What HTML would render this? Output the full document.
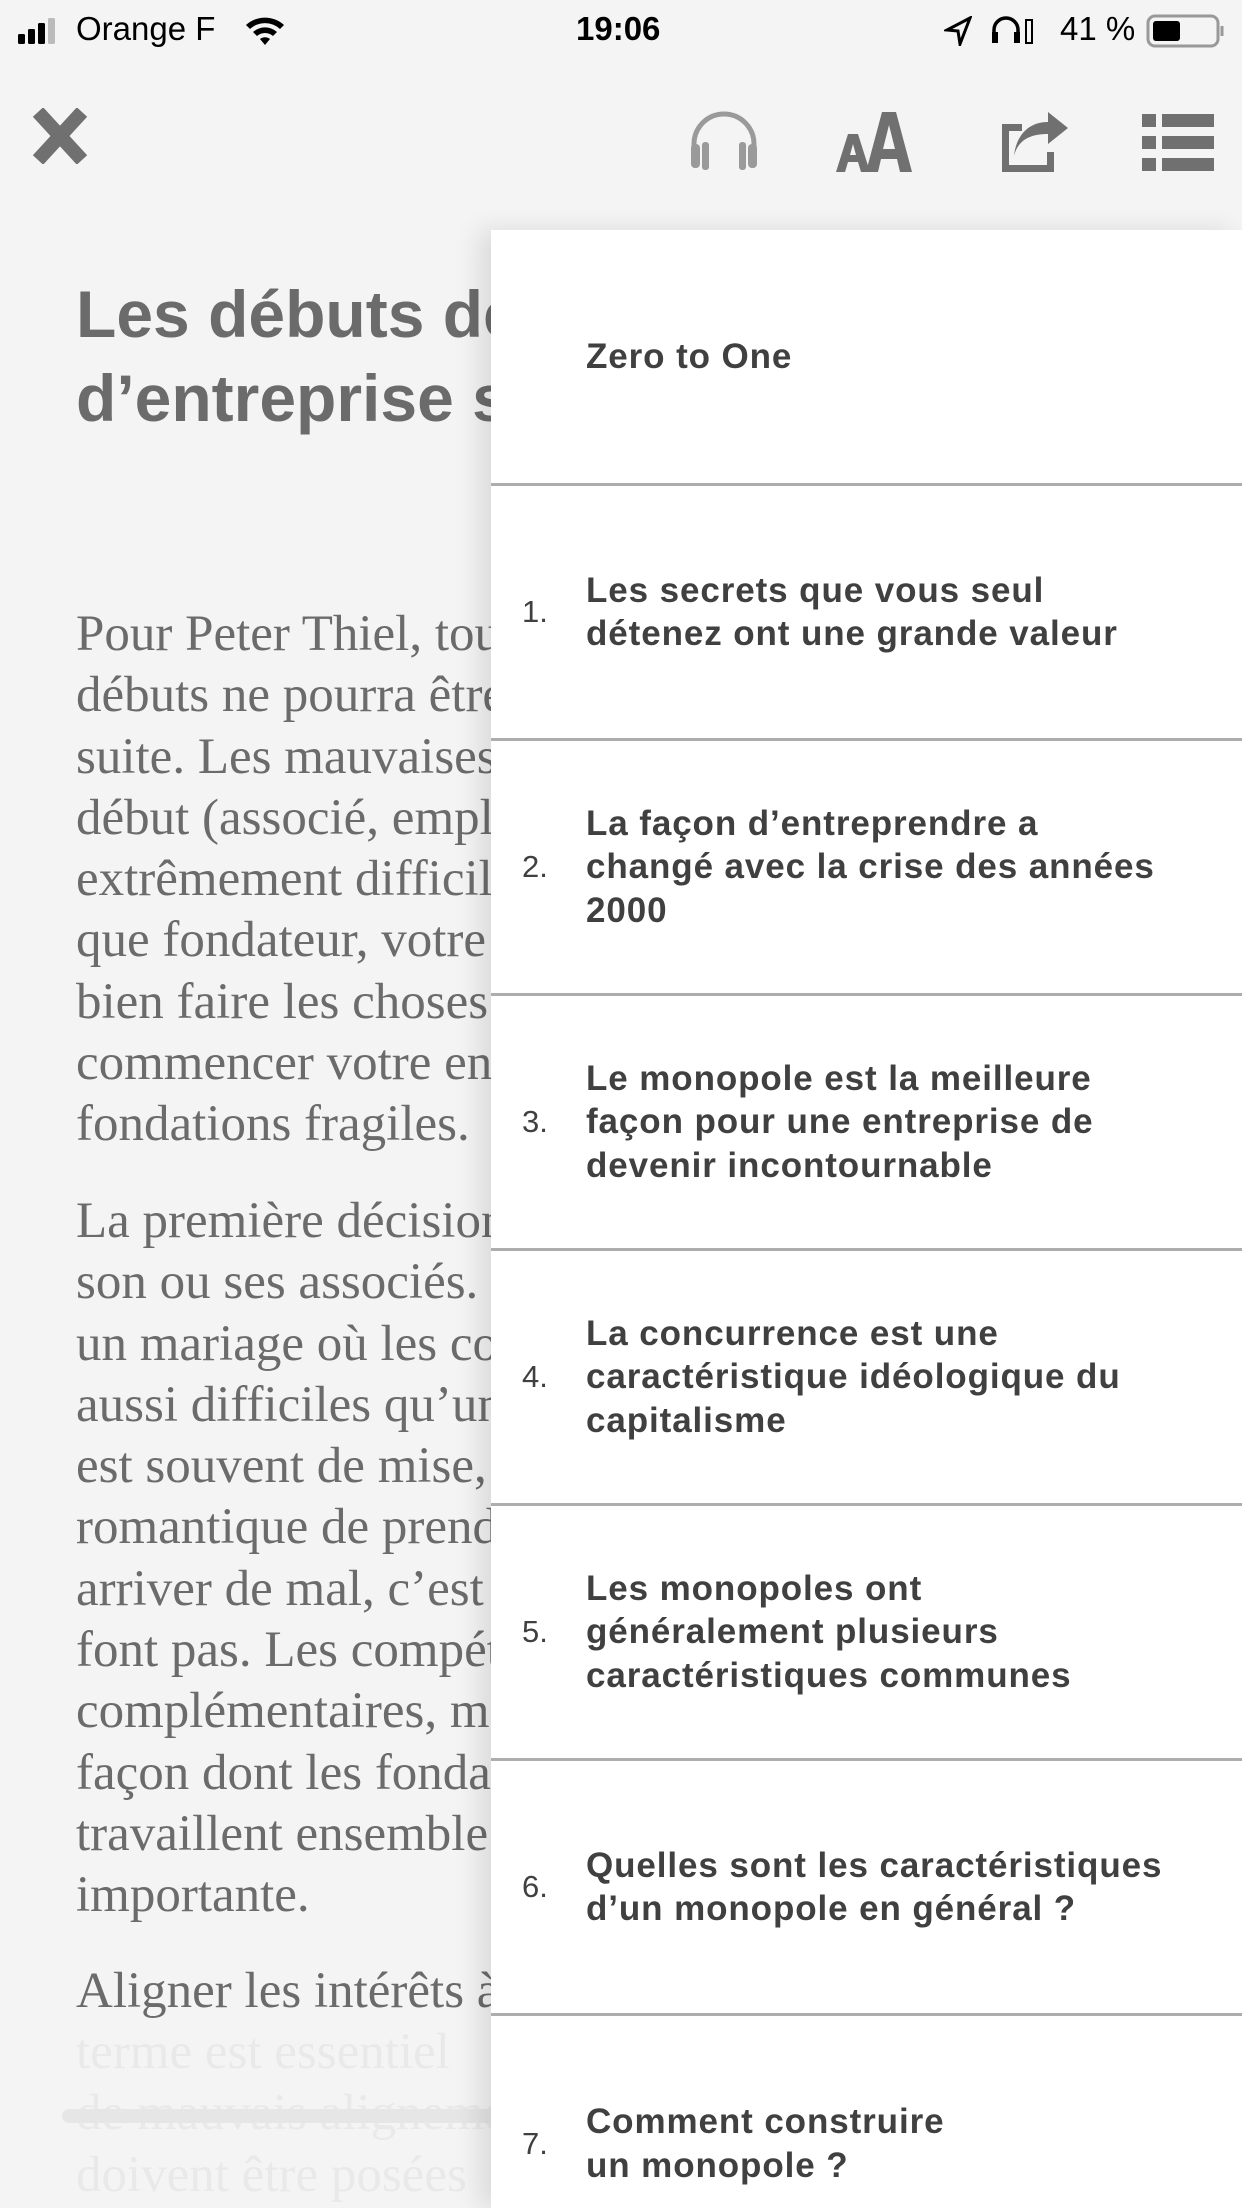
<!DOCTYPE html>
<html style="width:1242px;height:2208px;overflow:hidden"><head><meta charset="utf-8">
<style>
*{margin:0;padding:0;box-sizing:border-box}
body{width:1242px;height:2208px;overflow:hidden;background:#f4f4f4;position:relative;font-family:"Liberation Sans",sans-serif}
.sb{position:absolute;top:0;left:0;width:1242px;height:62px;font-size:33px;color:#000}
.sb span{position:absolute;top:10px}
.h{position:absolute;left:76px;top:272px;font-weight:bold;font-size:66px;line-height:84px;color:#6b6b6b;white-space:nowrap}
.body{position:absolute;left:76px;width:900px;font-family:"Liberation Serif",serif;font-size:51px;line-height:61.3px;color:#6b6b6b;white-space:nowrap}
.fade{color:#e9e9e9}
.panel{position:absolute;left:491px;top:230px;width:751px;height:1978px;overflow:hidden;background:#fff;box-shadow:-12px 0 24px rgba(0,0,0,0.10)}
.it{position:relative;height:255px;flex:none;border-bottom:3px solid #adadad;display:flex;align-items:center;color:#404040}
.it .n{position:absolute;left:31px;font-size:31px}
.it .t{margin-left:95px;font-weight:bold;font-size:35px;letter-spacing:0.9px;line-height:43.5px;white-space:nowrap}
</style></head><body>
<div class="sb">
 <svg style="position:absolute;left:18px;top:18px" width="50" height="26"><rect x="0" y="16" width="7" height="10" rx="1.5" fill="#000"/><rect x="10" y="11" width="7" height="15" rx="1.5" fill="#000"/><rect x="20" y="5" width="7" height="21" rx="1.5" fill="#000"/><rect x="30" y="0" width="7" height="26" rx="1.5" fill="#bbb"/></svg>
 <span style="left:76px">Orange F</span>
 <svg style="position:absolute;left:244px;top:14px" width="42" height="32" viewBox="0 0 42 32"><path d="M2 11a28 28 0 0 1 38 0l-4 4a22 22 0 0 0-30 0z" fill="#000"/><path d="M9 18a18 18 0 0 1 24 0l-4 4a12 12 0 0 0-16 0z" fill="#000"/><path d="M16 25a8 8 0 0 1 10 0l-5 6z" fill="#000"/></svg>
 <span style="left:576px;font-weight:bold">19:06</span>
 <svg style="position:absolute;left:944px;top:16px" width="28" height="30"><path d="M26 2L3 14l11 1 2 13z" fill="none" stroke="#000" stroke-width="3"/></svg>
 <svg style="position:absolute;left:990px;top:14px" width="48" height="32"><path d="M4 28V16a12 12 0 0 1 24 0v12" fill="none" stroke="#000" stroke-width="3.5"/><rect x="2" y="18" width="6" height="11" fill="#000"/><rect x="24" y="18" width="6" height="11" fill="#000"/><rect x="36" y="6" width="6" height="23" fill="none" stroke="#000" stroke-width="2"/></svg>
 <span style="left:1060px">41 %</span>
 <svg style="position:absolute;left:1146px;top:14px" width="84" height="34"><rect x="2" y="2" width="70" height="30" rx="7" fill="none" stroke="#999" stroke-width="3"/><rect x="7" y="7" width="27" height="20" rx="3" fill="#000"/><path d="M76 12v10" stroke="#999" stroke-width="3"/></svg>
</div>
<svg style="position:absolute;left:30px;top:108px" width="60" height="56" viewBox="0 0 60 56"><path d="M8 4L52 52M52 4L8 52" stroke="#707070" stroke-width="14"/></svg>
<svg style="position:absolute;left:686px;top:108px" width="76" height="62" viewBox="0 0 76 62"><path d="M8 44V36a30 30 0 0 1 60 0v8" fill="none" stroke="#9a9a9a" stroke-width="5"/><rect x="5" y="36" width="9" height="24" rx="4" fill="#9a9a9a"/><rect x="62" y="36" width="9" height="24" rx="4" fill="#9a9a9a"/><rect x="16" y="34" width="7" height="28" rx="3" fill="#9a9a9a"/><rect x="53" y="34" width="7" height="28" rx="3" fill="#9a9a9a"/></svg>
<svg style="position:absolute;left:836px;top:112px" width="92" height="60" viewBox="0 0 92 60"><path d="M0 60L12 22h10l12 38h-9l-3-10H12l-3 10zM14 43h6l-3-11z" fill="#707070"/><path d="M30 60L46 0h14l16 60H64l-3-13H45l-3 13zM47 37h12l-6-24z" fill="#707070"/></svg>
<svg style="position:absolute;left:1000px;top:112px" width="72" height="60" viewBox="0 0 72 60"><path d="M2 12h20v7H9v34h38V40h7v20H2z" fill="#707070"/><path d="M14 44c4-16 16-22 34-22v10l20-16L48 0v10C28 10 16 24 14 44z" fill="#707070"/></svg>
<svg style="position:absolute;left:1142px;top:112px" width="72" height="60"><rect x="0" y="2" width="14" height="13" fill="#707070"/><rect x="20" y="2" width="52" height="13" fill="#707070"/><rect x="0" y="24" width="14" height="13" fill="#707070"/><rect x="20" y="24" width="52" height="13" fill="#707070"/><rect x="0" y="46" width="14" height="13" fill="#707070"/><rect x="20" y="46" width="52" height="13" fill="#707070"/></svg>

<div class="h">Les débuts de la vie<br>d’entreprise sont cruciaux</div>
<div class="body" style="top:604px">Pour Peter Thiel, tout ce qui se passe aux<br>débuts ne pourra être modifié par la<br>suite. Les mauvaises décisions prises au<br>début (associé, employés, structure) sont<br>extrêmement difficiles à corriger. En tant<br>que fondateur, votre priorité doit être de<br>bien faire les choses dès le départ. Vous ne<br>commencer votre entreprise sur des<br>fondations fragiles.</div>
<div class="body" style="top:1191px">La première décision d’un fondateur est<br>son ou ses associés. C’est un peu comme<br>un mariage où les conflits peuvent être<br>aussi difficiles qu’un divorce. Le choix<br>est souvent de mise, mais le côté<br>romantique de prendre ce qui peut<br>arriver de mal, c’est que les fondateurs ne<br>font pas. Les compétences doivent être<br>complémentaires, mais aussi la<br>façon dont les fondateurs<br>travaillent ensemble est<br>importante.</div>
<div class="body" style="top:1961px">Aligner les intérêts à long</div>
<div class="body fade" style="top:2022px">terme est essentiel<br>de mauvais alignement<br>doivent être posées</div>
<div style="position:absolute;left:62px;top:2109px;width:440px;height:14px;border-radius:7px;background:#e6e6e6"></div>

<div class="panel">
 <div class="it" style="height:256px"><div class="t">Zero to One</div></div>
 <div class="it"><div class="n">1.</div><div class="t">Les secrets que vous seul<br>détenez ont une grande valeur</div></div>
 <div class="it"><div class="n">2.</div><div class="t">La façon d’entreprendre a<br>changé avec la crise des années<br>2000</div></div>
 <div class="it"><div class="n">3.</div><div class="t">Le monopole est la meilleure<br>façon pour une entreprise de<br>devenir incontournable</div></div>
 <div class="it"><div class="n">4.</div><div class="t">La concurrence est une<br>caractéristique idéologique du<br>capitalisme</div></div>
 <div class="it"><div class="n">5.</div><div class="t">Les monopoles ont<br>généralement plusieurs<br>caractéristiques communes</div></div>
 <div class="it"><div class="n">6.</div><div class="t">Quelles sont les caractéristiques<br>d’un monopole en général ?</div></div>
 <div class="it" style="border:none"><div class="n">7.</div><div class="t">Comment construire<br>un monopole ?</div></div>
</div>
</body></html>
